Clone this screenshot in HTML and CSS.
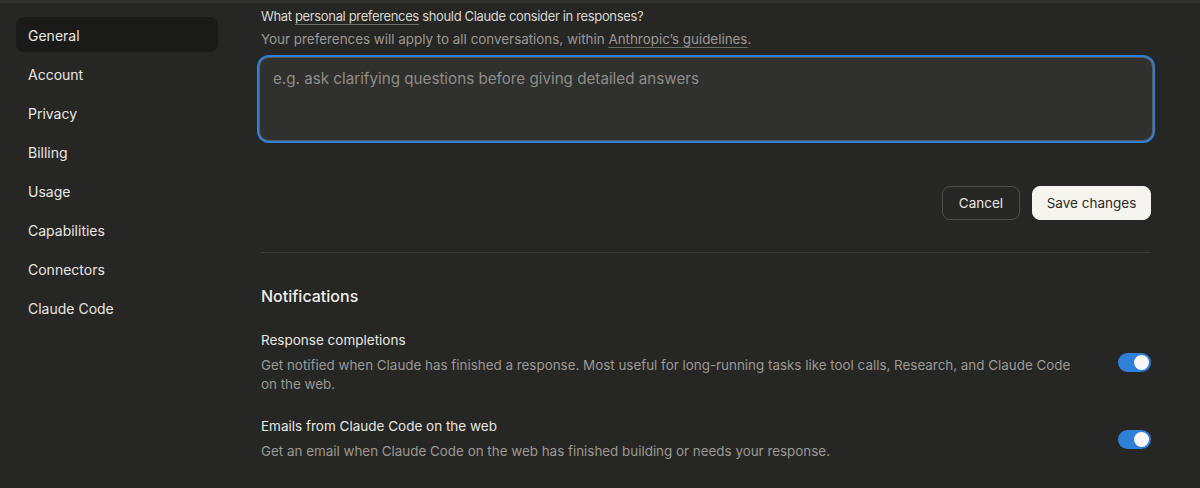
FILE: index.html
```html
<!DOCTYPE html>
<html>
<head>
<meta charset="utf-8">
<link rel="stylesheet" href="styles.css">
</head>
<body>
<div class="topline"></div>
<div class="layout">
  <nav class="sidebar">
    <a class="nav-item active">General</a>
    <a class="nav-item">Account</a>
    <a class="nav-item">Privacy</a>
    <a class="nav-item">Billing</a>
    <a class="nav-item">Usage</a>
    <a class="nav-item">Capabilities</a>
    <a class="nav-item">Connectors</a>
    <a class="nav-item">Claude Code</a>
  </nav>
  <main class="main">
    <section class="prefs">
      <div class="q">What <span class="ul">personal preferences</span> should Claude consider in responses?</div>
      <div class="sub">Your preferences will apply to all conversations, within <span class="ul">Anthropic’s guidelines</span>.</div>
      <div class="textarea">e.g. ask clarifying questions before giving detailed answers</div>
      <div class="actions">
        <button class="btn btn-secondary">Cancel</button>
        <button class="btn btn-primary">Save changes</button>
      </div>
    </section>
    <hr class="divider">
    <section class="notifs">
      <h2 class="h2">Notifications</h2>
      <div class="row">
        <div class="row-text">
          <div class="row-title">Response completions</div>
          <div class="row-desc">Get notified when Claude has finished a response. Most useful for long-running tasks like tool calls, Research, and Claude Code on the web.</div>
        </div>
        <div class="toggle"><span class="knob"></span></div>
      </div>
      <div class="row">
        <div class="row-text">
          <div class="row-title">Emails from Claude Code on the web</div>
          <div class="row-desc">Get an email when Claude Code on the web has finished building or needs your response.</div>
        </div>
        <div class="toggle"><span class="knob"></span></div>
      </div>
    </section>
  </main>
</div>
</body>
</html>
```

FILE: styles.css
```css
* { box-sizing: border-box; }
html, body { margin: 0; padding: 0; }
body {
  background: #262624;
  color: #e9e7e1;
  font-family: Inter, "Noto Sans", sans-serif;
  height: 488px;
  overflow: hidden;
}
.topline { height: 3px; background: #30302e; }
.layout { display: flex; gap: 43px; }
.sidebar {
  width: 218px;
  padding: 14px 0 0 16px;
  display: flex;
  flex-direction: column;
  gap: 4px;
}
.nav-item {
  display: flex;
  align-items: center;
  height: 35px;
  padding-left: 12px;
  padding-top: 1px;
  font-size: 14px;
  color: #e9e7e1;
  border-radius: 8px;
}
.nav-item.active { background: #1a1a18; }
.main { width: 890px; padding-top: 4px; }
.q { font-size: 13px; letter-spacing: -0.35px; line-height: 18px; color: #d9d7d0; }
.sub { font-size: 13.4px; line-height: 18px; color: #9b9994; margin-top: 5px; }
.ul { text-decoration: underline; text-decoration-color: #6d6b66; text-underline-offset: 3px; text-decoration-thickness: 1px; }
.textarea {
  margin: 9px -2px 0 -2px;
  height: 84px;
  border: 1px solid #5a5955;
  border-radius: 10px;
  background: #30302e;
  box-shadow: 0 0 0 2px #2f80d8;
  padding: 11px 13px;
  font-size: 15.2px;
  line-height: 20px;
  color: #8f8d88;
}
.actions { display: flex; justify-content: flex-end; gap: 12px; margin-top: 45px; }
.btn {
  height: 34px;
  border-radius: 8px;
  font-family: inherit;
  font-size: 13.5px;
  padding: 0;
  white-space: nowrap;
}
.btn-secondary { background: transparent; border: 1px solid #4e4d49; color: #e9e7e1; width: 78px; }
.btn-primary { background: #f6f4ee; border: 1px solid #f6f4ee; color: #2a2926; width: 119px; }
.divider { border: 0; border-top: 1px solid #3a3936; margin: 32px 0 0 0; }
.h2 { font-size: 16px; font-weight: 500; margin: 32px 0 0 0; line-height: 22px; color: #efede7; }
.row { display: flex; align-items: center; gap: 40px; padding-top: 24px; }
.row + .row { padding-top: 23px; }
.row-text { flex: 1; }
.row-title { font-size: 13.5px; line-height: 18px; color: #e9e7e1; }
.row-desc { font-size: 13.4px; line-height: 19px; color: #9b9994; margin-top: 7px; }
.toggle {
  width: 33px; height: 19px;
  border-radius: 10px;
  background: #2f80d8;
  position: relative;
  flex: none;
}
.knob {
  position: absolute;
  right: 2px; top: 2px;
  width: 15px; height: 15px;
  border-radius: 50%;
  background: #f7f7f7;
}
```
